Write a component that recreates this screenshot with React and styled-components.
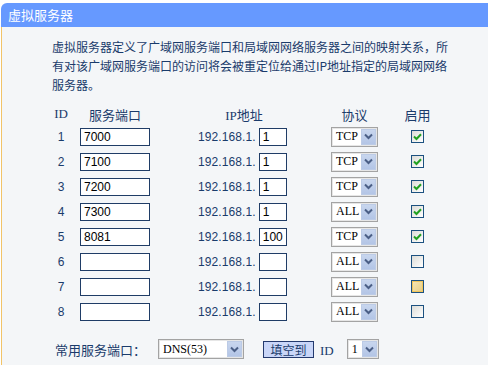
import { Fragment } from "react"
import styled, { createGlobalStyle } from "styled-components"

const GlobalStyle = createGlobalStyle`
  html, body {
    margin: 0;
    padding: 0;
    background: #ffffff;
  }
  body {
    font-family: "Noto Sans CJK SC", "Liberation Sans", sans-serif;
    color: #1a3b6b;
    font-size: 12px;
  }
`

const Panel = styled.div`
  margin: 3px 0 0 1px;
  width: 487px;
`
const Header = styled.div`
  height: 24px;
  background: #6699ff;
  border-top-left-radius: 6px;
  color: #ffffff;
  font-size: 13px;
  line-height: 24px;
  padding-left: 7px;
`
const Body = styled.div`
  background: #f4f6f8;
  border-left: 1px solid #f2c468;
  padding: 10px 0 20px 50px;
  min-height: 320px;
`
const Intro = styled.p`
  margin: 0;
  font-size: 12px;
  line-height: 19px;
  color: #1a3b6b;
`
const Table = styled.div`
  display: grid;
  grid-template-columns: 18px 128px 110px 93px 33px;
  grid-template-rows: 20px repeat(8, 25px);
  align-items: center;
  margin-top: 10px;
`
const HeadCell = styled.div`
  font-family: "Liberation Serif", "Noto Sans CJK SC", serif;
  font-size: 13px;
  text-align: center;
  width: ${p => p.$w || "auto"};
  margin-left: ${p => p.$ml || "0"};
`
const Num = styled.div`
  font-family: "Liberation Sans", sans-serif;
  font-size: 12px;
  text-align: center;
`
const Cell = styled.div`
  display: flex;
  align-items: center;
  justify-content: ${p => p.$center ? "center" : "flex-start"};
  padding-left: ${p => p.$pl || "0"};
`
const TextBox = styled.div`
  box-sizing: border-box;
  width: ${p => p.$w}px;
  height: 18px;
  border: 1px solid #1f3c66;
  background: #ffffff;
  color: #000000;
  font-family: "Liberation Sans", sans-serif;
  font-size: 12px;
  line-height: 16px;
  padding-left: 3px;
`
const IpPrefix = styled.span`
  font-family: "Liberation Sans", sans-serif;
  font-size: 12px;
  letter-spacing: 0.1px;
  margin-right: 3px;
`
const SelectBox = styled.div`
  box-sizing: border-box;
  width: ${p => p.$w}px;
  height: 20px;
  border: 1px solid #a3a3a3;
  box-shadow: inset 0 0 0 1px #e6e6e6;
  background: #ffffff;
  display: flex;
  align-items: center;
  justify-content: space-between;
  padding: 1px 1px 1px 4px;
`
const SelectText = styled.span`
  font-family: "Liberation Serif", serif;
  font-size: 12px;
  color: #000000;
`
const DropBtn = styled.div`
  width: 15px;
  height: 16px;
  background: linear-gradient(180deg, #c8d6ee 0%, #b3c5e6 100%);
  border: 1px solid #bccbe6;
  box-sizing: border-box;
  display: flex;
  align-items: center;
  justify-content: center;
`
const Check = styled.div`
  box-sizing: border-box;
  width: 13px;
  height: 13px;
  border: 1px solid #1c5180;
  background: ${p => p.$hover
    ? "linear-gradient(135deg, #f6e8b8 0%, #e6cc82 100%)"
    : "linear-gradient(135deg, #dcdcd7 0%, #ffffff 100%)"};
  box-shadow: ${p => p.$hover ? "inset 0 0 0 1px #f0c55c" : "none"};
  display: flex;
  align-items: center;
  justify-content: center;
`
const Footer = styled.div`
  display: flex;
  align-items: center;
  margin-top: 15px;
  padding-left: 3px;
`
const Label = styled.span`
  font-size: 13px;
  margin-right: 12px;
`
const FillButton = styled.div`
  box-sizing: border-box;
  width: 51px;
  height: 17px;
  margin-left: 19px;
  background: #c9d6f8;
  border: 1px solid #243a6e;
  font-size: 12px;
  line-height: 15px;
  text-align: center;
  color: #1a3b6b;
`
const SmallLabel = styled.span`
  font-family: "Liberation Serif", serif;
  font-size: 13px;
  margin: 4px 13px 0 6px;
`

const Chevron = () => (
  <svg width="9" height="7" viewBox="0 0 9 7">
    <path d="M1 1.5 L4.5 5 L8 1.5" fill="none" stroke="#4b5f86" strokeWidth="2" />
  </svg>
)

const Tick = () => (
  <svg width="9" height="8" viewBox="0 0 9 8">
    <path d="M1 3.5 L3.5 6 L8 1.2" fill="none" stroke="#21a121" strokeWidth="2" />
  </svg>
)

const Select = ({ w, value }) => (
  <SelectBox $w={w}>
    <SelectText>{value}</SelectText>
    <DropBtn><Chevron /></DropBtn>
  </SelectBox>
)

const rows = [
  { id: 1, port: "7000", ip: "1", proto: "TCP", on: true },
  { id: 2, port: "7100", ip: "1", proto: "TCP", on: true },
  { id: 3, port: "7200", ip: "1", proto: "TCP", on: true },
  { id: 4, port: "7300", ip: "1", proto: "ALL", on: true },
  { id: 5, port: "8081", ip: "100", proto: "TCP", on: true },
  { id: 6, port: "", ip: "", proto: "ALL", on: false },
  { id: 7, port: "", ip: "", proto: "ALL", on: false, hover: true },
  { id: 8, port: "", ip: "", proto: "ALL", on: false },
]

export default function App() {
  return (
    <>
      <GlobalStyle />
      <Panel>
        <Header>虚拟服务器</Header>
        <Body>
          <Intro>
            虚拟服务器定义了广域网服务端口和局域网网络服务器之间的映射关系，所<br />
            有对该广域网服务端口的访问将会被重定位给通过IP地址指定的局域网网络<br />
            服务器。
          </Intro>
          <Table>
            <HeadCell>ID</HeadCell>
            <HeadCell $w="70px" $ml="10px">服务端口</HeadCell>
            <HeadCell $w="92px">IP地址</HeadCell>
            <HeadCell>协议</HeadCell>
            <HeadCell>启用</HeadCell>
            {rows.map(r => (
              <Fragment key={r.id}>
                <Num>{r.id}</Num>
                <Cell $pl="10px"><TextBox $w={70}>{r.port}</TextBox></Cell>
                <Cell>
                  <IpPrefix>192.168.1.</IpPrefix>
                  <TextBox $w={28}>{r.ip}</TextBox>
                </Cell>
                <Cell $center><Select w={47} value={r.proto} /></Cell>
                <Cell $center>
                  <Check $hover={r.hover}>{r.on && <Tick />}</Check>
                </Cell>
              </Fragment>
            ))}
          </Table>
          <Footer>
            <Label>常用服务端口：</Label>
            <Select w={86} value="DNS(53)" />
            <FillButton>填空到</FillButton>
            <SmallLabel>ID</SmallLabel>
            <Select w={32} value="1" />
          </Footer>
        </Body>
      </Panel>
    </>
  )
}
